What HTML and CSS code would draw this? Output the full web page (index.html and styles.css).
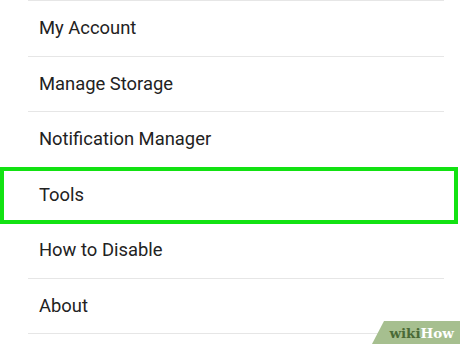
FILE: index.html
```html
<!DOCTYPE html>
<html>
<head>
<meta charset="utf-8">
<link rel="stylesheet" href="styles.css">
</head>
<body>
<div class="screen">
  <ul class="menu">
    <li class="item">My Account</li>
    <li class="item">Manage Storage</li>
    <li class="item">Notification Manager</li>
    <li class="item item--highlight">Tools</li>
    <li class="item">How to Disable</li>
    <li class="item">About</li>
    <li class="item"></li>
  </ul>
  <div class="badge"><span class="wiki">wiki</span><span class="how">How</span></div>
</div>
</body>
</html>
```
FILE: styles.css
```css
html, body {
  margin: 0;
  padding: 0;
  background: #ffffff;
}
.screen {
  position: relative;
  width: 460px;
  height: 344px;
  overflow: hidden;
}
.menu {
  list-style: none;
  margin: 0 0 0 28px;
  padding: 0;
  width: 416px;
}
.item {
  position: relative;
  box-sizing: border-box;
  height: 55.5px;
  border-top: 1.5px solid #e6e6e6;
  padding-left: 11px;
  padding-bottom: 1px;
  display: flex;
  align-items: center;
  font-family: Roboto, "Liberation Sans", sans-serif;
  font-size: 18.4px;
  color: #222222;
}
.item--highlight::after {
  content: "";
  position: absolute;
  z-index: 2;
  left: -28px;
  top: -1px;
  width: 458px;
  height: 57px;
  box-sizing: border-box;
  border: 4px solid #12e212;
}
.badge {
  position: absolute;
  right: 0;
  bottom: 0;
  width: 88px;
  height: 23px;
  background: #a6bf8f;
  clip-path: polygon(12px 0, 100% 0, 100% 100%, 0 100%);
  display: flex;
  align-items: center;
  justify-content: flex-end;
  padding-right: 6px;
  box-sizing: border-box;
  font-family: "DejaVu Serif", "Liberation Serif", serif;
  font-weight: bold;
  font-size: 13.5px;
}
.wiki { color: #4a6a36; }
.how { color: #ffffff; }
```
